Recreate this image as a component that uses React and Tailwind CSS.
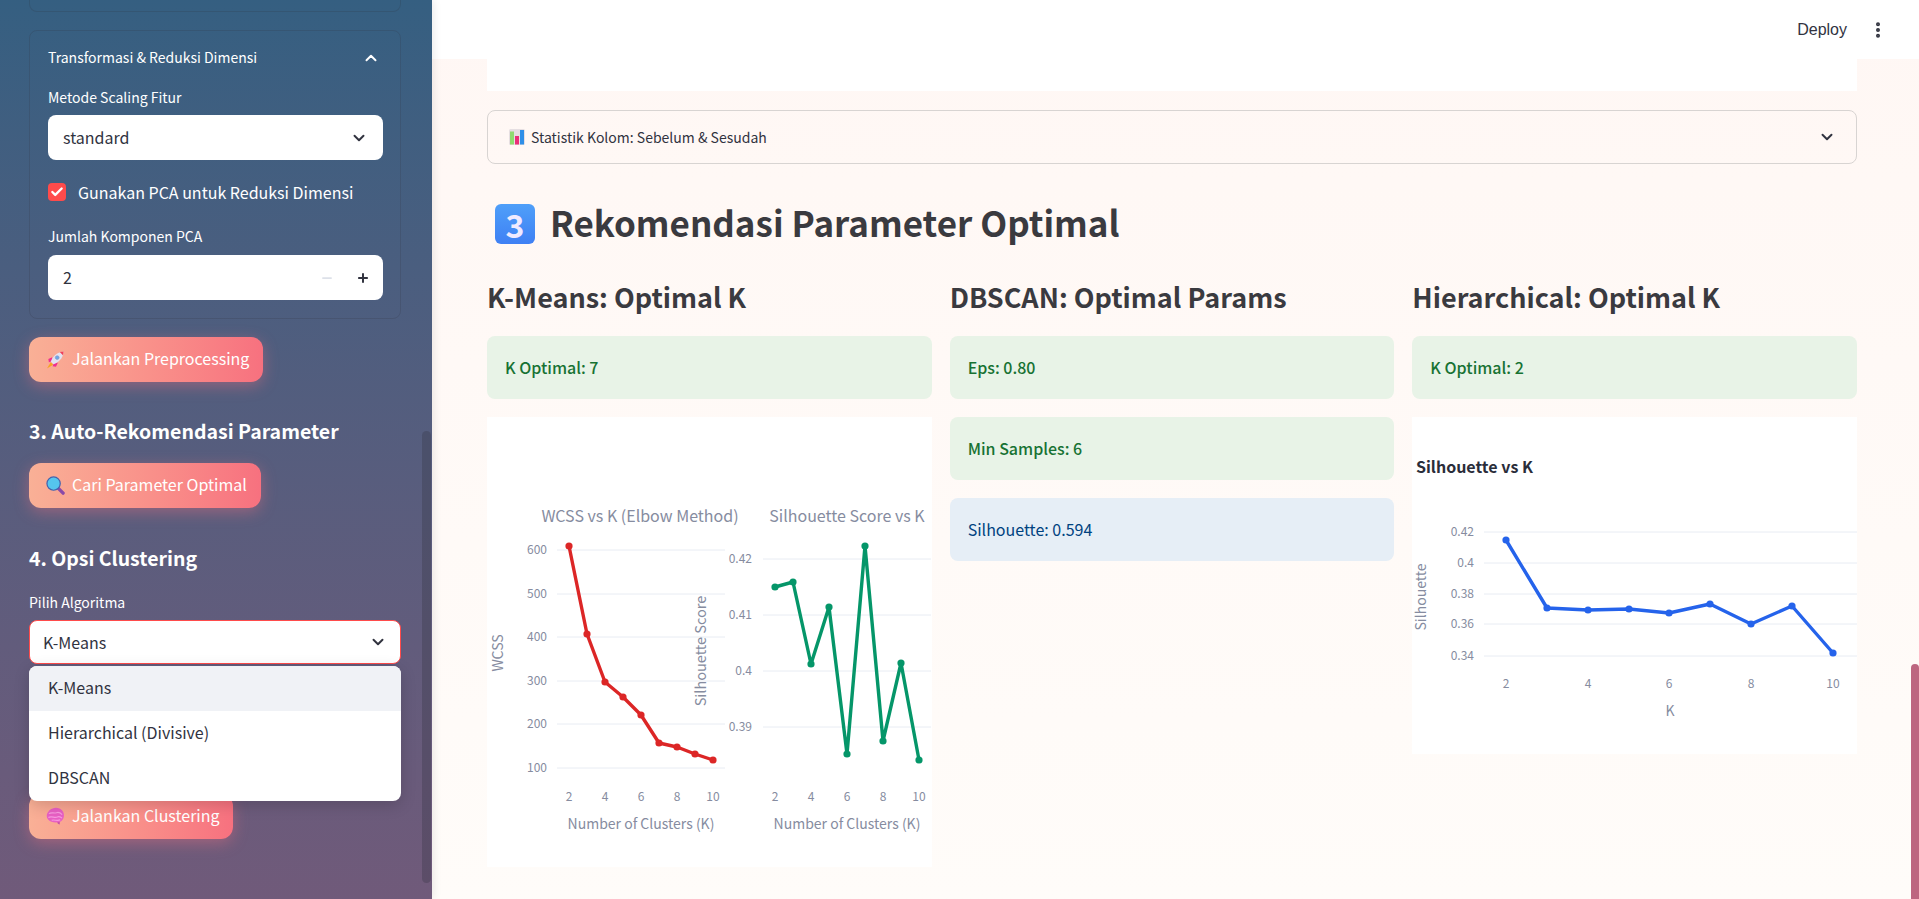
// App.jsx
// Streamlit-style clustering page: sidebar with options, main area with parameter recommendation.

import { ChevronDown, ChevronUp, Plus, Minus, Check, EllipsisVertical } from 'lucide-react';

// --- Emoji drawings (no emoji font available) ---
function RocketIcon() {
  return (
    <svg width="19" height="19" viewBox="0 0 20 20" className="shrink-0">
      <path d="M5 13 L1 19.5 L7.5 15.5 Z" fill="#f5a623" />
      <path d="M6.5 7.5 L2.5 9.5 L3 13 L7 11.5 Z" fill="#ef2f8f" />
      <path d="M12.5 13.5 L10.5 17.5 L7 17 L8.5 13 Z" fill="#ef2f8f" />
      <path d="M5 12 C7 7 11 2.5 18.5 1.5 C18 9 13 13 8 15 Z" fill="#e3e2f0" />
      <path d="M14.5 2.2 C16 1.8 17.5 1.6 18.5 1.5 C18.4 3 18.2 4.3 17.8 5.5 Z" fill="#f0405a" />
      <circle cx="11.8" cy="8" r="2" fill="#6aa8ea" stroke="#8f8fb8" strokeWidth="0.6" />
    </svg>
  );
}

function SearchIcon() {
  return (
    <svg width="19" height="19" viewBox="0 0 20 20" className="shrink-0">
      <path d="M13 13 L18 18" stroke="#8a4aa8" strokeWidth="3.6" strokeLinecap="round" />
      <circle cx="8" cy="8" r="7" fill="#55c5ee" stroke="#4463ad" strokeWidth="1.3" />
    </svg>
  );
}

function BrainIcon() {
  return (
    <svg width="19" height="19" viewBox="0 0 20 20" className="shrink-0">
      <path d="M11.5 15 L14.5 15 L14.5 18.5 L12.5 17.5 Z" fill="#c84ea8" />
      <path d="M7 1.5 C11 0 16 1.5 18 5 C20 9 18.5 14 15 15.5 C11 17 5 16.5 2.5 13.5 C0 10.5 0.5 7 2.5 5 C3.5 3 5 2 7 1.5 Z" fill="#e85fc4" />
      <path d="M3 7 C6 5 8 7 11 6 C13 5 15 6 17 8 M2.5 11 C6 9 9 12 12 10.5 C14 9.5 16 11 17 11.5 M6 14 C9 13 12 15 15 13.5" stroke="#f79ae0" strokeWidth="1.2" fill="none" />
    </svg>
  );
}

function ChartIcon() {
  return (
    <svg width="16" height="16" viewBox="0 0 16 16" className="shrink-0">
      <rect x="0" y="0" width="16" height="16" rx="1.5" fill="#e6dfe2" />
      <rect x="1" y="2.5" width="4" height="13" fill="#8fdc70" />
      <rect x="6" y="7" width="4" height="8.5" fill="#ea2f78" />
      <rect x="11" y="1" width="4" height="14.5" fill="#2f8fe8" />
    </svg>
  );
}

// --- Sidebar bits ---
function SidebarButton({ icon, children, className }) {
  return (
    <button
      type="button"
      className={`flex items-center gap-[7px] h-[45px] pl-[17px] rounded-xl bg-gradient-to-r from-[#f9b096] to-[#f7717f] text-white text-base leading-none shadow-[0_4px_15px_rgba(247,113,127,0.4)] ${className}`}
    >
      {icon}
      <span className="pb-[3px]">{children}</span>
    </button>
  );
}

function SelectBox({ value, className }) {
  return (
    <div className={`flex items-center justify-between bg-white rounded-lg text-[#31333f] text-base ${className}`}>
      <span className="pb-[1px]">{value}</span>
      <ChevronDown size={18} strokeWidth={2.6} />
    </div>
  );
}

const tick = '#868ca0';
const grid = '#e8ecf3';

// --- Plotly-like line chart pieces (coordinates relative to the chart panel) ---
function LinePlot({ points, color }) {
  return (
    <>
      <polyline points={points.map((p) => p.join(',')).join(' ')} fill="none" stroke={color} strokeWidth="3.4" strokeLinejoin="round" />
      {points.map((p, i) => (
        <circle key={i} cx={p[0]} cy={p[1]} r="3.6" fill={color} />
      ))}
    </>
  );
}

function GridY({ rows, x1, x2, labelX }) {
  return rows.map(([label, y]) => (
    <g key={label}>
      <line x1={x1} x2={x2} y1={y} y2={y} stroke={grid} strokeWidth="1" />
      <text x={labelX} y={y + 4} textAnchor="end" fontSize="12" fill={tick}>{label}</text>
    </g>
  ));
}

function TicksX({ cols, y }) {
  return cols.map(([label, x]) => (
    <text key={label} x={x} y={y} textAnchor="middle" fontSize="12" fill={tick}>{label}</text>
  ));
}

function ElbowChart() {
  const wcss = [[82, 129], [100, 217], [118, 265], [136, 280], [154, 298], [172, 326], [190, 330], [208, 337], [226, 343]];
  const sil = [[288, 170], [306, 165], [324, 247], [342, 190], [360, 337], [378, 129], [396, 324], [414, 246], [432, 343]];
  return (
    <svg width="445" height="450" className="block bg-white">
      <text x="153" y="105" textAnchor="middle" fontSize="16" fill={tick}>WCSS vs K (Elbow Method)</text>
      <text x="360" y="105" textAnchor="middle" fontSize="16" fill={tick}>Silhouette Score vs K</text>
      <GridY rows={[['600', 133], ['500', 177], ['400', 220], ['300', 264], ['200', 307], ['100', 351]]} x1={70} x2={238} labelX={60} />
      <GridY rows={[['0.42', 142], ['0.41', 198], ['0.4', 254], ['0.39', 310]]} x1={276} x2={444} labelX={265} />
      <TicksX cols={[['2', 82], ['4', 118], ['6', 154], ['8', 190], ['10', 226]]} y={384} />
      <TicksX cols={[['2', 288], ['4', 324], ['6', 360], ['8', 396], ['10', 432]]} y={384} />
      <text x="154" y="412" textAnchor="middle" fontSize="14" fill={tick}>Number of Clusters (K)</text>
      <text x="360" y="412" textAnchor="middle" fontSize="14" fill={tick}>Number of Clusters (K)</text>
      <text transform="translate(16 236) rotate(-90)" textAnchor="middle" fontSize="14" fill={tick}>WCSS</text>
      <text transform="translate(219 234) rotate(-90)" textAnchor="middle" fontSize="14.5" fill={tick}>Silhouette Score</text>
      <LinePlot points={wcss} color="#dc2626" />
      <LinePlot points={sil} color="#059669" />
    </svg>
  );
}

function SilhouetteChart() {
  const sil = [[94, 123], [135, 191], [176, 193], [217, 192], [257, 196], [298, 187], [339, 207], [380, 189], [421, 236]];
  return (
    <svg width="445" height="337" className="block bg-white">
      <text x="4" y="56" fontSize="16" fontWeight="600" fill="#2a2d3a">Silhouette vs K</text>
      <GridY rows={[['0.42', 115], ['0.4', 146], ['0.38', 177], ['0.36', 207], ['0.34', 239]]} x1={72} x2={445} labelX={62} />
      <TicksX cols={[['2', 94], ['4', 176], ['6', 257], ['8', 339], ['10', 421]]} y={271} />
      <text x="258" y="299" textAnchor="middle" fontSize="14" fill={tick}>K</text>
      <text transform="translate(14 180) rotate(-90)" textAnchor="middle" fontSize="14" fill={tick}>Silhouette</text>
      <LinePlot points={sil} color="#2563eb" />
    </svg>
  );
}

function Alert({ children, info }) {
  return (
    <div className={`flex items-center h-[63px] pl-[18px] pb-[1px] rounded-lg text-base ${info ? 'bg-[#e6eef6] text-[#004280]' : 'bg-[#e8f3e7] text-[#177233] font-medium'}`}>
      {children}
    </div>
  );
}

function ColumnTitle({ children }) {
  return <h3 className="h-[36px] mb-[21px] text-[#3a3a3f] text-[27px] leading-[36px] font-semibold">{children}</h3>;
}

export default function App() {
  return (
    <div className="flex h-screen overflow-hidden font-['Noto_Sans_CJK_SC',sans-serif] text-[#31333f]">

      {/* ── Sidebar ─────────────────────────────────────────────── */}
      <aside className="relative shrink-0 w-[432px] px-[29px] bg-gradient-to-b from-[#355f81] to-[#705a7a] text-white overflow-hidden shadow-[2px_0_8px_rgba(0,0,0,0.08)] z-10">
        {/* bottom edge of the expander scrolled out of view */}
        <div className="w-[372px] h-[12px] border-x border-b border-[#31333f]/20 rounded-b-lg" />

        <section className="w-[372px] h-[289px] mt-[18px] px-[18px] border border-[#31333f]/20 rounded-lg">
          <div className="flex items-center justify-between h-[54px] text-sm">
            <span className="pb-[2px]">Transformasi &amp; Reduksi Dimensi</span>
            <ChevronUp size={18} strokeWidth={2.6} className="mr-[2px]" />
          </div>
          <label className="block h-[30px] text-sm leading-[25px]">Metode Scaling Fitur</label>
          <SelectBox value="standard" className="w-[335px] h-[45px] pl-[15px] pr-[15px]" />
          <div className="flex items-center gap-[12px] h-[18px] mt-[23px]">
            <span className="flex items-center justify-center w-[18px] h-[18px] rounded bg-[#ff4b4b]">
              <Check size={14} strokeWidth={4} />
            </span>
            <span className="text-base">Gunakan PCA untuk Reduksi Dimensi</span>
          </div>
          <label className="block h-[31px] mt-[23px] text-sm leading-[25px]">Jumlah Komponen PCA</label>
          <div className="flex items-center justify-between w-[335px] h-[45px] pl-[15px] pr-[13px] bg-white rounded-lg text-[#31333f] text-base">
            <span className="pb-[1px]">2</span>
            <span className="flex items-center gap-[22px]">
              <Minus size={14} strokeWidth={3} className="text-[#dde1e9]" />
              <Plus size={14} strokeWidth={3.4} />
            </span>
          </div>
        </section>

        <SidebarButton icon={<RocketIcon />} className="w-[234px] mt-[18px]">Jalankan Preprocessing</SidebarButton>

        <h3 className="mt-[33px] text-[19.5px] leading-[32px] font-semibold">3. Auto-Rekomendasi Parameter</h3>
        <SidebarButton icon={<SearchIcon />} className="w-[232px] mt-[16px]">Cari Parameter Optimal</SidebarButton>

        <h3 className="mt-[34px] text-[19.5px] leading-[32px] font-semibold">4. Opsi Clustering</h3>
        <label className="block mt-[16px] h-[30px] text-sm leading-[25px]">Pilih Algoritma</label>

        <div className="relative w-[372px]">
          <SelectBox value="K-Means" className="h-[44px] pl-[13px] pr-[13px] border border-[#ff4b4b]" />
          {/* open dropdown */}
          <ul className="absolute z-20 left-0 top-[46px] w-full bg-white rounded-lg overflow-hidden text-[#31333f] text-base shadow-[0_4px_16px_rgba(0,0,0,0.16)]">
            <li className="flex items-center h-[45px] pl-[19px] pb-[3px] bg-[#f0f2f6]">K-Means</li>
            <li className="flex items-center h-[45px] pl-[19px] pb-[3px]">Hierarchical (Divisive)</li>
            <li className="flex items-center h-[45px] pl-[19px] pb-[3px]">DBSCAN</li>
          </ul>
        </div>

        <SidebarButton icon={<BrainIcon />} className="w-[204px] mt-[130px]">Jalankan Clustering</SidebarButton>

        {/* scrollbar */}
        <div className="absolute right-[1px] top-[431px] w-[9px] h-[452px] rounded-full bg-[#31333f]/30" />
      </aside>

      {/* ── Main ────────────────────────────────────────────────── */}
      <main className="relative flex-1 flex flex-col bg-gradient-to-b from-[#fff7f4] to-[#fffcf9] overflow-hidden">
        <header className="flex items-center justify-end shrink-0 h-[59px] pr-[31px] gap-[21px] bg-white font-['Liberation_Sans',sans-serif]">
          <span className="text-base text-[#31333f]">Deploy</span>
          <EllipsisVertical size={20} strokeWidth={2.8} />
        </header>

        <div className="pl-[55px] pr-[62px]">
          <div className="h-[32px] bg-white" />

          <div className="flex items-center justify-between h-[54px] mt-[19px] pl-[21px] pr-[20px] border border-[#d8d4d2] rounded-lg text-sm">
            <span className="flex items-center gap-[6px] pb-[1px]"><ChartIcon /> Statistik Kolom: Sebelum &amp; Sesudah</span>
            <ChevronDown size={18} strokeWidth={2.6} />
          </div>

          <h2 className="flex items-center gap-[15px] h-[56px] mt-[32px] pl-[8px] text-[#3a3a3f] text-[35px] leading-[56px] font-semibold">
            <span className="flex items-center justify-center w-[40px] h-[40px] rounded-md bg-gradient-to-b from-[#4f9ff9] to-[#3f80f4] text-[#efeaff] text-[32px] leading-none font-bold">3</span>
            <span className="pb-[4px]">Rekomendasi Parameter Optimal</span>
          </h2>

          <div className="grid grid-cols-3 gap-[18px] mt-[27px]">
            <div>
              <ColumnTitle>K-Means: Optimal K</ColumnTitle>
              <Alert>K Optimal: 7</Alert>
              <div className="mt-[18px]"><ElbowChart /></div>
            </div>
            <div className="flex flex-col">
              <ColumnTitle>DBSCAN: Optimal Params</ColumnTitle>
              <div className="flex flex-col gap-[18px]">
                <Alert>Eps: 0.80</Alert>
                <Alert>Min Samples: 6</Alert>
                <Alert info>Silhouette: 0.594</Alert>
              </div>
            </div>
            <div>
              <ColumnTitle>Hierarchical: Optimal K</ColumnTitle>
              <Alert>K Optimal: 2</Alert>
              <div className="mt-[18px]"><SilhouetteChart /></div>
            </div>
          </div>
        </div>

        {/* page scrollbar */}
        <div className="absolute right-0 top-[664px] w-[8px] h-[235px] rounded-t-md bg-[#bd6680]" />
      </main>
    </div>
  );
}
